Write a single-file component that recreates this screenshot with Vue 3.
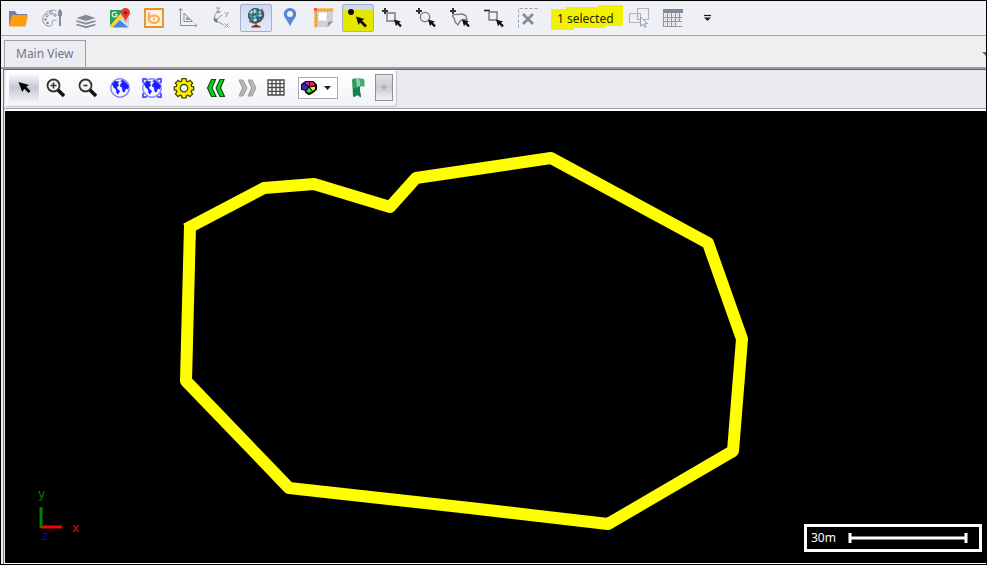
<script setup>
import { ref } from 'vue'

const cursor = '<path d="M12 11.500 19 13.500 17 14.800 19.800 17.600 18.200 19.200 15.300 16.300 14 18.200Z" fill="#111"/>'
const plus = '<path d="M3 0V6M0 3H6" stroke="#333" stroke-width="2"/>'
const arrow = '<path d="M4.500 4 15 7 12.300 8.800 16.500 13 14.500 15 10.300 10.800 8.200 14Z" fill="#050505"/>'
const lens = '<circle cx="7.500" cy="7.500" r="6" fill="#f4f4f4" stroke="#333" stroke-width="1.800"/><path d="m12 12 6 6" stroke="#111" stroke-width="3.600"/>'
const world = '<circle cx="10" cy="10" r="9.200" fill="#f4f4ff" stroke="#7f7fff" stroke-width="1.400"/><path d="M2 6 5 3 9 3.500 8 6 9.500 7.500 7 9 7.500 11 10 13 8 16.500 6.500 15 6 11.500 3.500 9.500ZM10 3l3-1 4 3.500 2 3-1.500 3-1.500-1-1.500 4-2-1-.5-4-2-1 .5-3 2-1Z" fill="#1c1cff"/>'

const tools = [
  { name: 'Open', art: '<path d="M1 18V3h6l2 3h10v4H5Z" fill="#77809a"/><path d="M4 7h16l-2.500 11.500H1Z" fill="#ff9d10"/>' },
  { name: 'Style', art: '<path d="M14.500 3C10 .500 1 4 .700 11c-.200 6 6 8.500 8.800 6.500 2-1.500-.5-3.500 1-5 1-1 3 .5 4-.5" fill="none" stroke="#8f95a3"/><g fill="none" stroke="#858b99"><circle cx="9" cy="5" r="1.400"/><circle cx="5" cy="7.500" r="1.300"/><circle cx="13" cy="7" r="1.200"/></g><circle cx="3.500" cy="11.500" r="1.200" fill="#858b99"/><circle cx="5.500" cy="15" r="1.300" fill="#858b99"/><path d="M16 8V5q0-3 2-4 2 1 2 4v3Z" fill="#858b99"/><path d="M18 8v10" stroke="#858b99" stroke-width="2"/>' },
  { name: 'Layers', art: '<path d="m.500 10 9.500-3.200 9.500 3.200-9.500 3Z" fill="#858b99"/><path d="m.500 13 9.500 2.700 9.500-2.700M.500 16.500 10 19.200l9.500-2.700" fill="none" stroke="#858b99" stroke-width="1.800"/>' },
  { name: 'Google Maps', art: '<path d="M0 2h15L3 17l-3 2Z" fill="#21a451"/><path d="m12 4 4 3L3.500 19.500H1q-1 0-1-2Z" fill="#ffd33a"/><path d="M10 12 18.500 19.500H2.500Z" fill="#4384ee"/><path d="m11 11 8 8V7l-3-1Z" fill="#cfd2d8"/><path d="M15.500 0a4.500 4.500 0 0 1 4.500 4.500c0 3.500-4 5-4.300 10C15 9.500 11 8 11 4.500A4.500 4.500 0 0 1 15.500 0Z" fill="#e63b2e"/><circle cx="15.500" cy="4.800" r="1.700" fill="#8f1b17"/><path d="M6.500 4.800A2.500 2.500 0 1 0 7 7.200V6.700H4.800" fill="none" stroke="#fff" stroke-width="1.100"/>' },
  { name: 'Bing', art: '<path d="M1 1h18v18H1Z" fill="#fff1df" stroke="#e99025" stroke-width="1.800"/><path d="M5 4.500v9" stroke="#f6b160" stroke-width="2.200"/><ellipse cx="10" cy="11.200" rx="5" ry="3.600" fill="none" stroke="#f6b160" stroke-width="2.400"/><circle cx="10" cy="11" r="1.200" fill="#f6b160"/>' },
  { name: 'Measure', art: '<path d="M2.500 1v16.500H18M.500 2.500l2-2 2 2M17 15.500l2 2-2 1.500M6 5v8.500h8.500ZM8.500 9.500v2h3Z" fill="none" stroke="#8b909d"/>' },
  { name: 'Axes', art: '<path d="M8 4.500C3 4 1.500 8 3.500 12l8 5M4 12l6-5" fill="none" stroke="#8b909d"/><path d="m1.500 10 4 1-.5 4-3-2Z" fill="#747a88"/><path d="M4 0h4L4.500 3.500h4M12.500 4l1.800 2.200M16.500 4l-3 5M12.500 15.500l4 4M16.500 15.500l-4 4" fill="none" stroke="#9297a4"/>' },
  { name: 'Globe', active: true, art: '<circle cx="9.500" cy="7.500" r="7" fill="#3296a8" stroke="#2d3844"/><path d="m5 3 4-2 1 3-3 3-4-1ZM10 6l4-3 2 4-3 2ZM5 9l4-1 2 4-3 2Z" fill="#b9eef1"/><path d="M3 6h13M3 10h13M7 1v13M12 1v13" stroke="#17414d" stroke-width=".900"/><path d="M15.500 1q4.500 7-1 12-6 4-11.500 0M10 15v3" fill="none" stroke="#75433d" stroke-width="1.400"/><path d="M5 19.500q1-2.500 5-2.500t5 2.500Z" fill="#7c302b"/>' },
  { name: 'Place', art: '<path fill-rule="evenodd" d="M10 0a6 6 0 0 1 6.200 6.200C16.200 10 12 12.500 10 18.500 8 12.500 3.800 10 3.800 6.200A6 6 0 0 1 10 0Zm0 3a3 3 0 1 0 0 6 3 3 0 0 0 0-6Z" fill="#5288d6"/>' },
  { name: 'Layout', art: '<path d="M3 3h16v11l-4.500 5H3Z" fill="#d0d2d5"/><path d="M4.500 4.500h8v8h-8Z" fill="#fff"/><path d="M19 13l-5 1-.5 5Z" fill="#8d929a"/><path d="M1.700.500v19M.500 1.700h19" stroke="#f0b34a" stroke-width="3"/><path d="M2.700 4v15M4 2.700h15" stroke="#b97a30" stroke-dasharray="1 2"/><path d="M0 0h3v3H0Z" fill="#e66336"/>' },
  { name: 'Select point', active: true, marked: true, art: '<circle cx="3" cy="4" r="3" fill="#101000"/><path d="m8 8.500 8.500 2.500-2.500 1.500 5 5-2 2-5-5-1.500 2.500Z" fill="#101000"/>' },
  { name: 'Select by rectangle', art: plus + '<path d="M5 5h8v8H5Z" fill="none" stroke="#777" stroke-width="1.400"/>' + cursor },
  { name: 'Select by circle', art: plus + '<circle cx="9" cy="9" r="4.700" fill="none" stroke="#777" stroke-width="1.300"/>' + cursor },
  { name: 'Select by polygon', art: plus + '<path d="M2.500 8Q4 6 8 6.500q5-1.500 8 1.500l1 4-4-.5-3 1.500-2 4-3-3-.5-3Z" fill="none" stroke="#777" stroke-width="1.300"/>' + cursor },
  { name: 'Remove from selection', art: '<path d="M0 2.500h6" stroke="#222" stroke-width="1.600"/><path d="M5 4h8v8H5Z" fill="none" stroke="#777" stroke-width="1.400"/>' + cursor },
  { name: 'Clear selection', art: '<path d="M.500 19.500V.500h19" fill="none" stroke="#989da9" stroke-dasharray="3 2"/><path d="m5 6 10 10M15 6 5 16" stroke="#858b99" stroke-width="2.800"/>' },
]
const resultTools = [
  { name: 'Selected shapes', art: '<path d="M8.500.500h11v11h-11ZM.500 5.500h11v9H.500Z" fill="none" stroke="#b3b6c0" stroke-width="1.200"/><path d="m11.500 9 7 6.500-3 .2 1.500 3-1.500.5-1.500-3-2.500 2Z" fill="#f4f5fa" stroke="#979ba8"/>' },
  { name: 'Attribute table', art: '<path d="M0 1h20v4H0Z" fill="#858b99"/><path d="M.500 5v14M4.500 5v14M8.500 5v14M12.500 5v14M16.500 5v8M0 9.500h19M0 13.500h19M0 18.500h19" fill="none" stroke="#9297a4" stroke-width="1.100"/><path d="M2 7.500h17M2 11.500h17M2 16h17" stroke="#c2c5ce" stroke-dasharray="1 3"/>' },
  { name: 'More tools', art: '<path d="M7 7.500h7" stroke="#171720" stroke-width="1.200"/><path d="M7 9.500h7L10.500 13Z" fill="#171720"/>' },
]
const viewTools = [
  { name: 'Pointer', active: true, art: arrow },
  { name: 'Zoom in', art: lens + '<path d="M7.500 4.500v6M4.500 7.500h6" stroke="#333" stroke-width="1.600"/>' },
  { name: 'Zoom out', art: lens + '<path d="M5.500 7.500h4" stroke="#333" stroke-width="1.600"/>' },
  { name: 'Full extent', art: world },
  { name: 'Zoom to layer', art: world + '<path d="M1 5V1h4M15 1h4v4M19 15v4h-4M5 19H1v-4" fill="none" stroke="#5c5cff" stroke-width="2"/>' },
  { name: 'Settings', art: '<path fill-rule="evenodd" d="M8 .700h4l.5 2.500 1.500.6 2-1.400 2.600 2.600L17.100 7l.6 1.500 2 .4v3l-2 .5-.6 1.600 1.500 2-2.600 2.600-2-1.400-1.500.6-.5 2H8l-.5-2-1.500-.6-2 1.400-2.600-2.600 1.500-2-.6-1.600-2-.5v-3l2-.4L2.900 7 1.400 5 4 2.400l2 1.400 1.500-.6ZM10 6.500a3.700 3.700 0 1 0 0 7.400 3.700 3.700 0 0 0 0-7.400Z" fill="#f8f000" stroke="#494900" stroke-width="1.300"/>' },
  { name: 'Previous extent', art: '<path d="M5.500 1.500h4L6 10l4 8.500H5.500L1.500 10ZM14 1.500h4L14.500 10l4 8.500H14L10 10Z" fill="#08d51c" stroke="#174b17" stroke-width="1.200"/>' },
  { name: 'Next extent', art: '<path d="M1 2h4l4 8-4 8H1l3.500-8ZM10 2h4l4 8-4 8h-4l3.500-8Z" fill="#b5b5b5" stroke="#9d9d9d"/>' },
  { name: 'Grid', narrow: true, art: '<path d="M2 2h16v15H2ZM6 2v15M10 2v15M14 2v15M2 5.700h16M2 9.500h16M2 13.300h16" fill="#fff" stroke="#464646" stroke-width="1.300"/>' },
]
const theme = ref('wheel')
</script>

<template>
  <div class="window">
    <header class="toolbar" role="toolbar" aria-label="Map tools">
      <button v-for="t in tools" :key="t.name" type="button" class="tool" :class="{ active: t.active, marked: t.marked }" :aria-label="t.name">
        <svg viewBox="0 0 20 20" aria-hidden="true" v-html="t.art"></svg>
      </button>
      <output class="count">
        <svg class="marker" viewBox="0 0 72 26" preserveAspectRatio="none" aria-hidden="true">
          <path d="M0 4h15V2h32V0h25v21H54v2H23v2H0Z" fill="#f2f200" />
        </svg>
        <span class="count-text">1 selected</span>
      </output>
      <button v-for="t in resultTools" :key="t.name" type="button" class="tool" :aria-label="t.name">
        <svg viewBox="0 0 20 20" aria-hidden="true" v-html="t.art"></svg>
      </button>
    </header>

    <nav class="tabs" aria-label="Views">
      <a class="tab" href="#main-view">Main View</a>
      <button type="button" class="tab-menu" aria-label="View list">
        <svg viewBox="0 0 4 4" aria-hidden="true"><path d="M0 0h4v4Z" fill="#646676" /></svg>
      </button>
    </nav>

    <main id="main-view" class="view">
      <div class="view-bar">
        <div class="view-tools" role="toolbar" aria-label="View tools">
          <button v-for="t in viewTools" :key="t.name" type="button" class="view-tool" :class="{ active: t.active, narrow: t.narrow }" :aria-label="t.name">
            <svg viewBox="0 0 20 20" aria-hidden="true" v-html="t.art"></svg>
          </button>
          <label class="theme">
            <select v-model="theme" aria-label="Colour theme">
              <option value="wheel" aria-label="Colour wheel"></option>
            </select>
            <svg class="theme-art" viewBox="0 0 40 22" aria-hidden="true">
              <path d="M8 5h7l3 3v4l-3 3-4 2-3-2v-2l-4-1V8l2-2Z" stroke="#000" stroke-width="2" />
              <path d="M11 10 6 6l3-1h3Z" fill="#c818c8" /><path d="m11 10 1-5h3l2 3Z" fill="#f02058" />
              <path d="m11 10 6-1v3l-2 2Z" fill="#ffe91c" /><path d="m11 10 4 4-4 2-3-2Z" fill="#27e827" />
              <path d="m11 10-3 3-4-1V8l2-1Z" fill="#3829b8" />
              <path d="m11 10-5-4M11 10l1-6M11 10l7-1M11 10l4 5M11 10l-4 5" stroke="#000" />
              <path d="M26 9h7l-3.500 4Z" fill="#202028" />
            </svg>
          </label>
          <button type="button" class="view-tool" aria-label="Bookmark">
            <svg viewBox="0 0 20 20" aria-hidden="true">
              <path d="M4 2q0-1.500 2-1.500h6V13l1 6.500-3.500-2.500L6 19l-1-1Z" fill="#2f9a63" />
              <path d="M5 10q4 1 7-2v5l1 6.500L9.500 17 6 19l-1-1Z" fill="#15804a" />
              <path d="M8 1h4v7l-3 1Z" fill="#8fd0aa" />
              <path d="M10.500.500H14q2.500 0 2.500 3V9l-2-1-2.500 1V4q0-2.500-1.500-3.500Z" fill="#4aa877" />
            </svg>
          </button>
          <button type="button" class="extra" aria-label="Toolbar options">
            <svg viewBox="0 0 8 8" aria-hidden="true"><path d="M4 0v3M1 2.500l3 1 3-1M2 6.500 4 4l2 2.500" fill="none" stroke="#94a0b5" /><path d="M3 3h2v2H3Z" fill="#c9a38b" /></svg>
          </button>
        </div>
      </div>

      <section class="map" aria-label="Map">
        <svg class="shape" aria-hidden="true">
          <polyline points="181,118 259,77 309,73 385,96 411,67 546,47 703,132 737,228 728,340 603,413 465,397 284,377 181,270 185,115" fill="none" stroke="#ff0" stroke-width="12" stroke-linejoin="round" />
        </svg>
        <svg class="axes" viewBox="0 0 56 60" aria-hidden="true">
          <path d="M10 40h21" stroke="#f00" stroke-width="3" />
          <path d="M10 20v21" stroke="#008000" stroke-width="3" />
          <text x="7" y="11" fill="#008000">y</text>
          <text x="41" y="45" fill="#f00">x</text>
          <text x="11" y="53" fill="#0000e0">z</text>
        </svg>
        <div class="scale">
          <span>30m</span>
          <svg viewBox="0 0 120 12" aria-hidden="true">
            <path d="M2 6h116" stroke="#fff" stroke-width="3" />
            <path d="M2 1v10M118 1v10" stroke="#fff" stroke-width="3" />
          </svg>
        </div>
      </section>
    </main>
  </div>
</template>

<style>
body { margin: 0; }
</style>

<style scoped>
.window {
  box-sizing: border-box;
  display: flex;
  flex-direction: column;
  min-height: 100vh;
  border: 1px solid #000;
  background: #efefef;
  font-family: "Noto Sans", "DejaVu Sans Condensed", sans-serif;
  font-size: 12px;
  overflow: hidden;
}
button { padding: 0; border: 0; background: none; font: inherit; }
svg { display: block; }
.toolbar {
  display: flex;
  align-items: center;
  gap: 2px;
  padding: 3px 1px;
  border-bottom: 1px solid #a3a4aa;
  background: #eff0f6;
}
.tool {
  box-sizing: border-box;
  display: grid;
  place-items: center;
  flex: none;
  width: 32px;
  height: 28px;
  border: 1px solid transparent;
}
.tool svg, .view-tool svg { width: 20px; height: 20px; overflow: visible; }
.tool.active {
  border-color: #a5afc8;
  border-radius: 2px;
  background: linear-gradient(#cdd8f0, #e2e9fb);
}
.tool.marked { background: linear-gradient(#ced7ee 5px, #e4e800 5px); }
.count {
  display: grid;
  align-items: center;
  padding-left: 5px;
  margin-right: -2px;
  color: #222200;
}
.marker { grid-area: 1 / 1; width: 72px; height: 26px; }
.count-text { grid-area: 1 / 1; padding-left: 6px; }
.tabs {
  display: flex;
  align-items: flex-end;
  justify-content: space-between;
  padding: 4px 0 0 3px;
  border-bottom: 2px solid #9b9ba0;
  background: #efefef;
}
.tab {
  padding: 0 11px;
  border: 1px solid #9a9eb0;
  border-bottom: 0;
  background: #ebecf2;
  color: #747783;
  line-height: 26px;
  text-decoration: none;
}
.tab-menu { align-self: center; }
.tab-menu svg { width: 4px; height: 4px; }
.view {
  display: flex;
  flex: 1;
  flex-direction: column;
  margin-left: 2px;
  border-top: 1px solid #65656b;
  border-left: 1px solid #77777d;
  background: #ececf0;
}
.view-bar {
  display: flex;
  padding: 0 2px 1px;
  border-bottom: 1px solid #a0a0a4;
  background: #e9eaf0;
}
.view-tools {
  display: flex;
  align-items: center;
  gap: 2px;
  padding: 3px 3px 5px 2px;
  border: 1px solid #c2c4cb;
  border-top-color: #fff;
  border-left-color: #fff;
  border-radius: 3px;
  background: linear-gradient(#fff, #f2f2f6);
}
.view-tool {
  display: grid;
  place-items: center;
  width: 30px;
  height: 27px;
}
.view-tool.active { background: linear-gradient(#f8f8fa, #c6c9d2 50%, #eeeff3); }
.view-tool.narrow { width: 22px; }
.theme { position: relative; margin: 0 3px 0 9px; }
.theme select {
  display: block;
  width: 40px;
  height: 22px;
  border: 1px solid #a5a9b8;
  border-radius: 0;
  background: #fff;
  appearance: none;
}
.theme-art { position: absolute; inset: 0; width: 40px; height: 22px; pointer-events: none; }
.extra {
  box-sizing: border-box;
  display: grid;
  place-items: center;
  width: 18px;
  height: 27px;
  border: 1px solid #8e9199;
  background: linear-gradient(#e0e1e4, #cbcdd2 50%, #f0f0f3);
}
.extra svg { width: 8px; height: 8px; }
.map {
  position: relative;
  flex: 1;
  margin-left: 1px;
  border-top: 2px solid #fff;
  border-bottom: 1px solid #fff;
  background: #000;
}
.shape { position: absolute; inset: 0; width: 100%; height: 100%; }
.axes {
  position: absolute;
  left: 26px;
  bottom: 16px;
  width: 56px;
  height: 60px;
  font-family: "DejaVu Sans", sans-serif;
}
.scale {
  position: absolute;
  right: 4px;
  bottom: 11px;
  display: flex;
  align-items: center;
  justify-content: space-between;
  box-sizing: border-box;
  width: 178px;
  padding: 4px 11px 4px 4px;
  border: 3px solid #fff;
  color: #fff;
  line-height: 14px;
}
.scale svg { width: 120px; height: 12px; }
</style>
